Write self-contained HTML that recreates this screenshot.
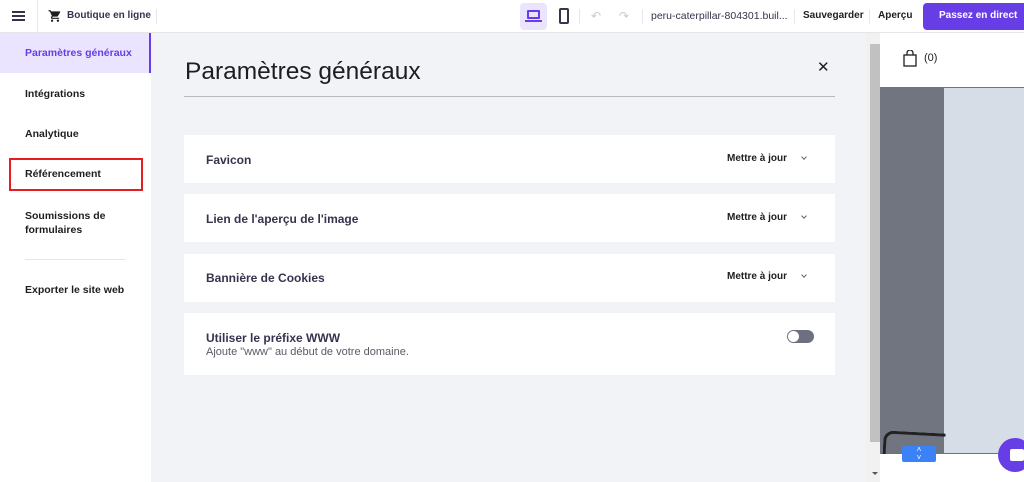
<!DOCTYPE html>
<html><head><meta charset="utf-8"><style>
*{box-sizing:border-box;margin:0;padding:0}
body{width:1024px;height:482px;overflow:hidden;font-family:"Liberation Sans",sans-serif;background:#f2f3f6;position:relative;color:#1d1e20}
.top{position:absolute;left:0;top:0;width:1024px;height:33px;background:#fff;border-bottom:1px solid #e6e6ea}
.abs{position:absolute}
.side{position:absolute;left:0;top:33px;width:151px;height:449px;background:#fff}
.side div{position:absolute;left:25px;font-size:10.5px;font-weight:bold;color:#1d1e20}
.card{position:absolute;left:184px;width:651px;background:#fff}
.card .t{position:absolute;left:22px;font-size:12px;font-weight:bold;color:#36344d}
.card .m{position:absolute;right:48px;font-size:10px;font-weight:bold;color:#1d1e20}
.card .c{position:absolute;right:29px;width:4px;height:4px;border-right:1px solid #666;border-bottom:1px solid #666;transform:rotate(45deg)}
</style></head><body>
<div class="top">
  <div class="abs" style="left:12px;top:11px;width:13px;height:2px;background:#36344d;box-shadow:0 4px 0 #36344d,0 8px 0 #36344d"></div>
  <div class="abs" style="left:37px;top:0;width:1px;height:33px;background:#e6e6ea"></div>
  <svg class="abs" style="left:48px;top:9px" width="14" height="14" viewBox="0 0 24 24"><path fill="#1d1e20" d="M7 18c-1.1 0-2 .9-2 2s.9 2 2 2 2-.9 2-2-.9-2-2-2zM1 2v2h2l3.6 7.6-1.4 2.4c-.1.3-.2.6-.2 1 0 1.1.9 2 2 2h12v-2H7.4c-.1 0-.2-.1-.2-.2v-.1l.9-1.7h7.4c.8 0 1.4-.4 1.7-1l3.6-6.5c.1-.2.1-.3.1-.5 0-.6-.4-1-1-1H5.2l-.9-2H1zm16 16c-1.1 0-2 .9-2 2s.9 2 2 2 2-.9 2-2-.9-2-2-2z"/></svg>
  <div class="abs" style="left:67px;top:10px;font-size:10px;font-weight:bold;color:#36344d">Boutique en ligne</div>
  <div class="abs" style="left:156px;top:9px;width:1px;height:15px;background:#e6e6ea"></div>
  <div class="abs" style="left:520px;top:3px;width:27px;height:27px;background:#ebe4ff;border-radius:4px"></div>
  <div class="abs" style="left:527px;top:10px;width:13px;height:9px;border:2px solid #673de6;border-radius:1px"></div>
  <div class="abs" style="left:525px;top:20px;width:17px;height:2px;background:#673de6"></div>
  <div class="abs" style="left:559px;top:8px;width:10px;height:16px;border:2px solid #36344d;border-radius:2px"></div>
  <div class="abs" style="left:579px;top:9px;width:1px;height:15px;background:#e6e6ea"></div>
  <div class="abs" style="left:591px;top:9px;font-size:12px;color:#c9c9d0">↶</div>
  <div class="abs" style="left:619px;top:9px;font-size:12px;color:#c9c9d0">↷</div>
  <div class="abs" style="left:642px;top:9px;width:1px;height:15px;background:#e6e6ea"></div>
  <div class="abs" style="left:651px;top:10px;font-size:10.5px;color:#36344d">peru-caterpillar-804301.buil...</div>
  <div class="abs" style="left:794px;top:9px;width:1px;height:15px;background:#e6e6ea"></div>
  <div class="abs" style="left:803px;top:10px;font-size:10px;font-weight:bold;color:#1d1e20">Sauvegarder</div>
  <div class="abs" style="left:869px;top:9px;width:1px;height:15px;background:#e6e6ea"></div>
  <div class="abs" style="left:878px;top:10px;font-size:10px;font-weight:bold;color:#1d1e20">Aperçu</div>
  <div class="abs" style="left:923px;top:3px;width:101px;height:27px;background:#673de6;border-radius:4px 0 0 4px"></div>
  <div class="abs" style="left:939px;top:10px;font-size:10px;font-weight:bold;color:#fff">Passez en direct</div>
</div>
<div class="side">
  <div class="abs" style="left:0;top:0;width:151px;height:40px;background:#ebe4ff;border-right:2px solid #673de6"></div>
  <div style="top:14px;color:#673de6">Paramètres généraux</div>
  <div style="top:55px">Intégrations</div>
  <div style="top:95px">Analytique</div>
  <div class="abs" style="left:9px;top:125px;width:134px;height:33px;border:2px solid #e51c23"></div>
  <div style="top:135px">Référencement</div>
  <div style="top:176px;line-height:14px">Soumissions de<br>formulaires</div>
  <div class="abs" style="left:25px;top:226px;width:101px;height:1px;background:#e6e6ea"></div>
  <div style="top:251px">Exporter le site web</div>
</div>
<div class="abs" style="left:185px;top:58px;font-size:24.5px;color:#1d1e20">Paramètres généraux</div>
<div class="abs" style="left:817px;top:58px;font-size:15px;color:#1d1e20">✕</div>
<div class="abs" style="left:184px;top:96px;width:651px;height:1px;background:#b8b8c0"></div>
<div class="card" style="top:135px;height:48px"><div class="t" style="top:18px">Favicon</div><div class="m" style="top:18px">Mettre à jour</div><div class="c" style="top:20px"></div></div>
<div class="card" style="top:194px;height:48px"><div class="t" style="top:18px">Lien de l'aperçu de l'image</div><div class="m" style="top:18px">Mettre à jour</div><div class="c" style="top:20px"></div></div>
<div class="card" style="top:254px;height:48px"><div class="t" style="top:17px">Bannière de Cookies</div><div class="m" style="top:17px">Mettre à jour</div><div class="c" style="top:19px"></div></div>
<div class="card" style="top:313px;height:62px"><div class="t" style="top:18px">Utiliser le préfixe WWW</div>
  <div class="abs" style="left:22px;top:33px;font-size:11px;color:#5a5a66">Ajoute "www" au début de votre domaine.</div>
  <div class="abs" style="left:603px;top:17px;width:27px;height:13px;border-radius:7px;background:#6d7081"></div>
  <div class="abs" style="left:604px;top:18px;width:11px;height:11px;border-radius:50%;background:#fff"></div>
</div>
<div class="abs" style="left:866px;top:33px;width:14px;height:449px;background:#f1f1f1"></div>
<div class="abs" style="left:870px;top:44px;width:10px;height:398px;background:#c1c1c1"></div>
<div class="abs" style="left:872px;top:472px;width:0;height:0;border-left:3px solid transparent;border-right:3px solid transparent;border-top:3px solid #555"></div>
<div class="abs" style="left:880px;top:33px;width:144px;height:449px;background:#fff"></div>
<svg class="abs" style="left:903px;top:50px" width="14" height="17" viewBox="0 0 14 17"><rect x="1" y="5" width="12" height="11" fill="none" stroke="#1d1e20" stroke-width="1.3"/><path d="M4 5V3a3 3 0 0 1 6 0v2" fill="none" stroke="#1d1e20" stroke-width="1.3"/></svg>
<div class="abs" style="left:924px;top:52px;font-size:11px;color:#1d1e20">(0)</div>
<div class="abs" style="left:880px;top:87px;width:144px;height:367px;background:#d7dde6;border-top:1px solid #5b74b0;border-bottom:1px solid #5b74b0"></div>
<div class="abs" style="left:880px;top:88px;width:64px;height:365px;background:#717580"></div>
<div class="abs" style="left:883px;top:432px;width:62px;height:30px;border:3px solid #222;border-radius:10px 0 0 0;border-right:none;border-bottom:none;transform:rotate(3deg)"></div>
<div class="abs" style="left:880px;top:454px;width:144px;height:28px;background:#fff"></div>
<div class="abs" style="left:902px;top:446px;width:34px;height:16px;background:#3b82f6;border-radius:2px;color:#fff;font-size:8px;text-align:center;line-height:8px">˄<br>˅</div>
<div class="abs" style="left:998px;top:438px;width:34px;height:34px;border-radius:50%;background:#673de6"></div>
<div class="abs" style="left:1010px;top:449px;width:14px;height:12px;background:#fff;border-radius:2px"></div>
</body></html>
